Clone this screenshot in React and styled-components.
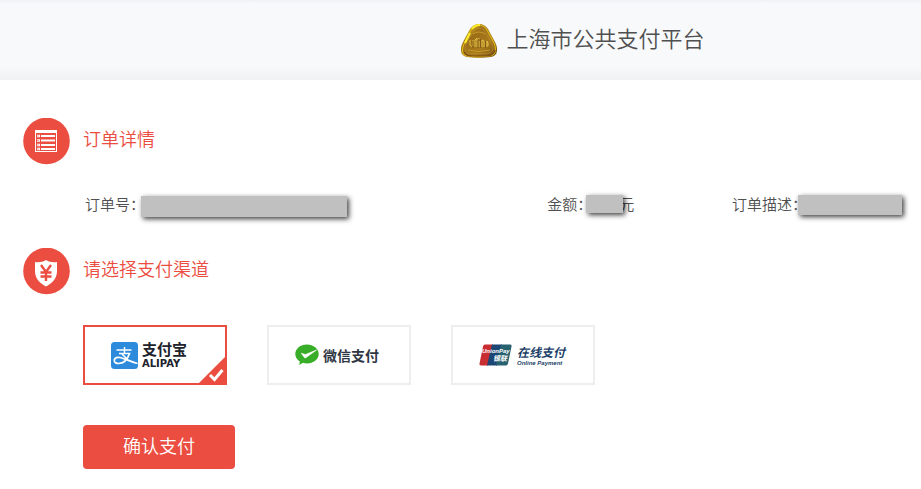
import React, { useState } from "react";
import styled, { createGlobalStyle } from "styled-components";

const RED = "#eb4d40";

const GlobalStyle = createGlobalStyle`
  * { box-sizing: border-box; }
  body {
    margin: 0;
    background: #fff;
    color: #505050;
    font-family: "Noto Sans CJK SC", sans-serif;
    font-weight: 350;
  }
`;

const Header = styled.header`
  display: flex;
  align-items: center;
  gap: 10px;
  height: 80px;
  padding: 2px 0 0 50%;
  background: linear-gradient(#eff2f4 0, #f8f9fb 4px, #f8f9fb 66px, #f0f1f3 100%);
`;

const Title = styled.h1`
  margin: 0;
  padding-bottom: 8px;
  font-size: 22px;
  line-height: 32px;
  font-weight: 350;
  color: #505050;
  white-space: nowrap;
`;

const Content = styled.main`
  padding: 38px 4px 20px 23px;
`;

const SectionHeading = styled.div`
  display: flex;
  align-items: center;
  gap: 13px;
  height: 47px;
`;

const SectionTitle = styled.h2`
  margin: 0;
  padding-bottom: 8px;
  font-size: 18px;
  line-height: 26px;
  font-weight: 350;
  color: ${RED};
`;

const Details = styled.dl`
  display: grid;
  grid-template-columns: 5fr 2fr 2fr;
  align-items: center;
  height: 32px;
  margin: 25px 0 26px 62px;
  font-size: 15px;
  line-height: 22px;
  white-space: nowrap;
`;

const Detail = styled.div`
  display: flex;
  align-items: center;
  height: 32px;
`;

const Label = styled.dt`
  padding-bottom: 4px;
`;

const Value = styled.dd`
  display: flex;
  align-items: center;
  margin: 0 0 0 ${(p) => -p.$overlap}px;
`;

const Mask = styled.span`
  position: relative;
  z-index: 1;
  width: ${(p) => p.$width}px;
  height: ${(p) => p.$height}px;
  margin-bottom: ${(p) => p.$raise || 0}px;
  background: #c0c0c0;
  box-shadow: 2px 2px 5px rgba(0, 0, 0, 0.75);
`;

const Unit = styled.span`
  margin-left: -4px;
  padding-bottom: 4px;
`;

const Channels = styled.fieldset`
  display: flex;
  flex-wrap: wrap;
  gap: 40px;
  margin: 30px 0 40px 60px;
  padding: 0;
  border: 0;
`;

const Channel = styled.label`
  position: relative;
  display: flex;
  align-items: center;
  gap: 4px;
  width: 144px;
  height: 60px;
  padding-left: 26px;
  border: 2px solid ${(p) => (p.$selected ? RED : "#eee")};
  cursor: pointer;
`;

const Radio = styled.input`
  position: absolute;
  inset: 0;
  width: 100%;
  height: 100%;
  margin: 0;
  opacity: 0;
  cursor: pointer;
`;

const Corner = styled.svg`
  position: absolute;
  right: -2px;
  bottom: -2px;
`;

const Wordmark = styled.span`
  display: flex;
  flex-direction: column;
`;

const BrandName = styled.span`
  font-size: ${(p) => p.$size}px;
  line-height: ${(p) => p.$size + 3}px;
  font-weight: 700;
  font-style: ${(p) => (p.$slanted ? "italic" : "normal")};
  color: ${(p) => p.$color};
`;

const BrandLatin = styled.span`
  font-family: ${(p) => (p.$slanted ? '"Liberation Sans"' : '"DejaVu Sans"')}, sans-serif;
  font-size: ${(p) => p.$size}px;
  line-height: ${(p) => p.$size + 2}px;
  font-weight: 700;
  font-style: ${(p) => (p.$slanted ? "italic" : "normal")};
  color: ${(p) => p.$color};
  white-space: nowrap;
`;

const Submit = styled.button`
  display: block;
  width: 152px;
  height: 44px;
  margin-left: 60px;
  padding: 0 0 4px;
  border: 0;
  border-radius: 4px;
  background: ${RED};
  color: #fff;
  font-family: inherit;
  font-size: 18px;
  font-weight: 350;
  line-height: 26px;
  cursor: pointer;
`;

function Emblem() {
  return (
    <svg width="36" height="36" viewBox="0 0 36 36" aria-hidden="true">
      <defs>
        <linearGradient id="gold" x1="0" y1="0" x2="1" y2="1">
          <stop offset="0" stopColor="#f5dc1c" />
          <stop offset="0.35" stopColor="#9c6d18" />
          <stop offset="0.65" stopColor="#a97b1c" />
          <stop offset="1" stopColor="#6f4710" />
        </linearGradient>
      </defs>
      <path d="M18 1c4 0 7 2 9 5l7 13c4 8 2 14-4 15-7 1-17 1-24 0-6-1-8-7-4-15L9 6c2-3 5-5 9-5z" fill="url(#gold)" />
      <path d="M18 2c4 0 6 2 8 5l7 13c3 7 1 12-4 13-7 1-16 1-23 0-5-1-6-6-3-12l7-14c2-3 4-5 8-5z" fill="none" stroke="#d8b416" strokeWidth="1.2" />
      <path d="M18 5c4 0 5 2 7 5l6 11c2 5 1 8-3 9-7 1-13 1-20 0-4-1-5-4-3-9l6-11c2-3 3-5 7-5z" fill="none" stroke="#b68a2c" strokeWidth="0.8" />
      <path d="M3 29c2 4 6 4 10 4h12c5 0 8-2 9-6" fill="none" stroke="#7b4d12" strokeWidth="1.200" />
      <path d="M9 17v5q1 3 3 0v-5M14 24v-7l2-2v9M18 24v-6M18 16v-1M21 24v-7l2 1v6M26 24v-6l1 2v3" fill="none" stroke="#e2c44a" strokeWidth="1" />
      <path d="M7 27q11 3 22 0M12 11q6-4 12 0" fill="none" stroke="#c79b2a" strokeWidth="1" />
      <path d="M12 18v7M17 17v8M19.500 16v9M24.500 18v7" stroke="#7c5417" strokeWidth="0.800" />
      <path d="M11 6q3-4 8-4M4 20l5-10" fill="none" stroke="#ffee2c" strokeWidth="2" />
    </svg>
  );
}

function OrderIcon() {
  return (
    <svg width="47" height="47" viewBox="0 0 47 47" aria-hidden="true">
      <circle cx="23.500" cy="23" r="23.300" fill={RED} />
      <rect x="12" y="12" width="22" height="22" fill="#fff" />
      <path d="M13 15h20v18h-20z" fill={RED} />
      <path d="M14 18h3M14 22.500h3M14 27h3M14 31h3" stroke="#fff" strokeWidth="2.600" />
      <path d="M18 18h14M18 22.500h14M18 27h14M18 31h14" stroke="#fff" strokeWidth="2.200" />
      <path d="M14.500 18h1M14.500 22.500h1M14.500 27h1M14.500 31h1" stroke={RED} strokeWidth="1" />
    </svg>
  );
}

function ShieldIcon() {
  return (
    <svg width="47" height="47" viewBox="0 0 47 47" aria-hidden="true">
      <circle cx="23.500" cy="23" r="23.300" fill={RED} />
      <path d="M23 12c3 2 7 2.500 11 2v9c0 8-5 12-11 15.500C17 35 12 31 12 23v-9c4 .5 8 0 11-2z" fill="#fff" />
      <path d="M18 17l5 7 5-7M23 24v9M17.500 24.500h11M17.500 28.500h11" fill="none" stroke={RED} strokeWidth="2.400" />
    </svg>
  );
}

function AlipayIcon() {
  return (
    <svg width="27" height="27" viewBox="0 0 27 27" aria-hidden="true">
      <rect width="27" height="27" rx="3.500" fill="#2e8bdc" />
      <path d="M5.500 8h15M13.500 5v6" stroke="#fff" strokeWidth="1.400" fill="none" />
      <path d="M8 11.500h10.500c-2 6-6 10-11 10-3 0-4.500-1.500-4.200-3.500.4-2 2.700-3 5.700-2.500 5 1 10 4 17.500 6M11 12l7 7" fill="none" stroke="#fff" strokeWidth="1.700" />
    </svg>
  );
}

function WechatIcon() {
  return (
    <svg width="24" height="22" viewBox="0 0 24 22" aria-hidden="true">
      <path d="M12 .5C5.400.5.300 4.700.300 10c0 3.200 1.700 5.800 4.500 7.500L4.300 21l3.600-2.200c1.300.4 2.700.6 4.100.6 6.500 0 11.700-4.200 11.700-9.400S18.500.5 12 .5z" fill="#38ad27" />
      <path d="M6.300 9.200l3 4.300c.4.500 1 .5 1.500.2L21.500 6 10.300 10.600z" fill="#fff" stroke="#fff" strokeWidth=".6" />
    </svg>
  );
}

const CardText = styled.text`
  font-family: "Liberation Sans", "Noto Sans CJK SC", sans-serif;
  font-size: ${(p) => p.$size}px;
  font-style: italic;
  font-weight: 700;
  fill: #fff;
`;

function UnionPayIcon() {
  return (
    <svg width="34" height="22" viewBox="0 0 34 22" role="img" aria-label="UnionPay 银联">
      <path d="M6 .5h8L9 21.500H2q-2 0-1.500-2L4 2.500q.4-2 2-2z" fill="#c82d31" />
      <path d="M13 .5h10l-5 21H8z" fill="#1c4674" />
      <path d="M22 .5h9q2 0 1.500 2l-3.500 17q-.4 2-2 2H17z" fill="#28616f" />
      <CardText $size={6} x="3" y="9">UnionPay</CardText>
      <CardText $size={7} x="14" y="17">银联</CardText>
    </svg>
  );
}

const CHANNELS = [
  { id: "alipay", icon: AlipayIcon, name: "支付宝", size: 15, latin: "ALIPAY", latinSize: 10, color: "#20222c" },
  { id: "wechat", icon: WechatIcon, name: "微信支付", size: 14, color: "#303744" },
  { id: "unionpay", icon: UnionPayIcon, name: "在线支付", size: 12, latin: "Online Payment", latinSize: 6, color: "#1c3f68", slanted: true },
];

export default function App() {
  const [selected, setSelected] = useState("alipay");
  return (
    <>
      <GlobalStyle />
      <Header>
        <Emblem />
        <Title>上海市公共支付平台</Title>
      </Header>
      <Content>
        <SectionHeading>
          <OrderIcon />
          <SectionTitle>订单详情</SectionTitle>
        </SectionHeading>
        <Details>
          <Detail>
            <Label>订单号：</Label>
            <Value $overlap={4}><Mask $width={206} $height={21} /></Value>
          </Detail>
          <Detail>
            <Label>金额：</Label>
            <Value $overlap={6}>
              <Mask $width={37} $height={18} $raise={4} />
              <Unit>元</Unit>
            </Value>
          </Detail>
          <Detail>
            <Label>订单描述：</Label>
            <Value $overlap={9}><Mask $width={104} $height={20} $raise={2} /></Value>
          </Detail>
        </Details>
        <SectionHeading>
          <ShieldIcon />
          <SectionTitle id="channel-title">请选择支付渠道</SectionTitle>
        </SectionHeading>
        <Channels aria-labelledby="channel-title">
          {CHANNELS.map(({ id, icon: Icon, name, size, latin, latinSize, color, slanted }) => (
            <Channel key={id} $selected={selected === id}>
              <Radio type="radio" name="channel" value={id} checked={selected === id} onChange={() => setSelected(id)} />
              <Icon />
              <Wordmark>
                <BrandName $size={size} $color={color} $slanted={slanted}>{name}</BrandName>
                {latin && <BrandLatin $size={latinSize} $color={color} $slanted={slanted}>{latin}</BrandLatin>}
              </Wordmark>
              {selected === id && (
                <Corner width="30" height="30" viewBox="0 0 30 30" aria-hidden="true">
                  <path d="M30 0v30H0z" fill={RED} />
                  <path d="M13 20l4.500 4.500L25.500 15" fill="none" stroke="#fff" strokeWidth="3" />
                </Corner>
              )}
            </Channel>
          ))}
        </Channels>
        <Submit type="button">确认支付</Submit>
      </Content>
    </>
  );
}
